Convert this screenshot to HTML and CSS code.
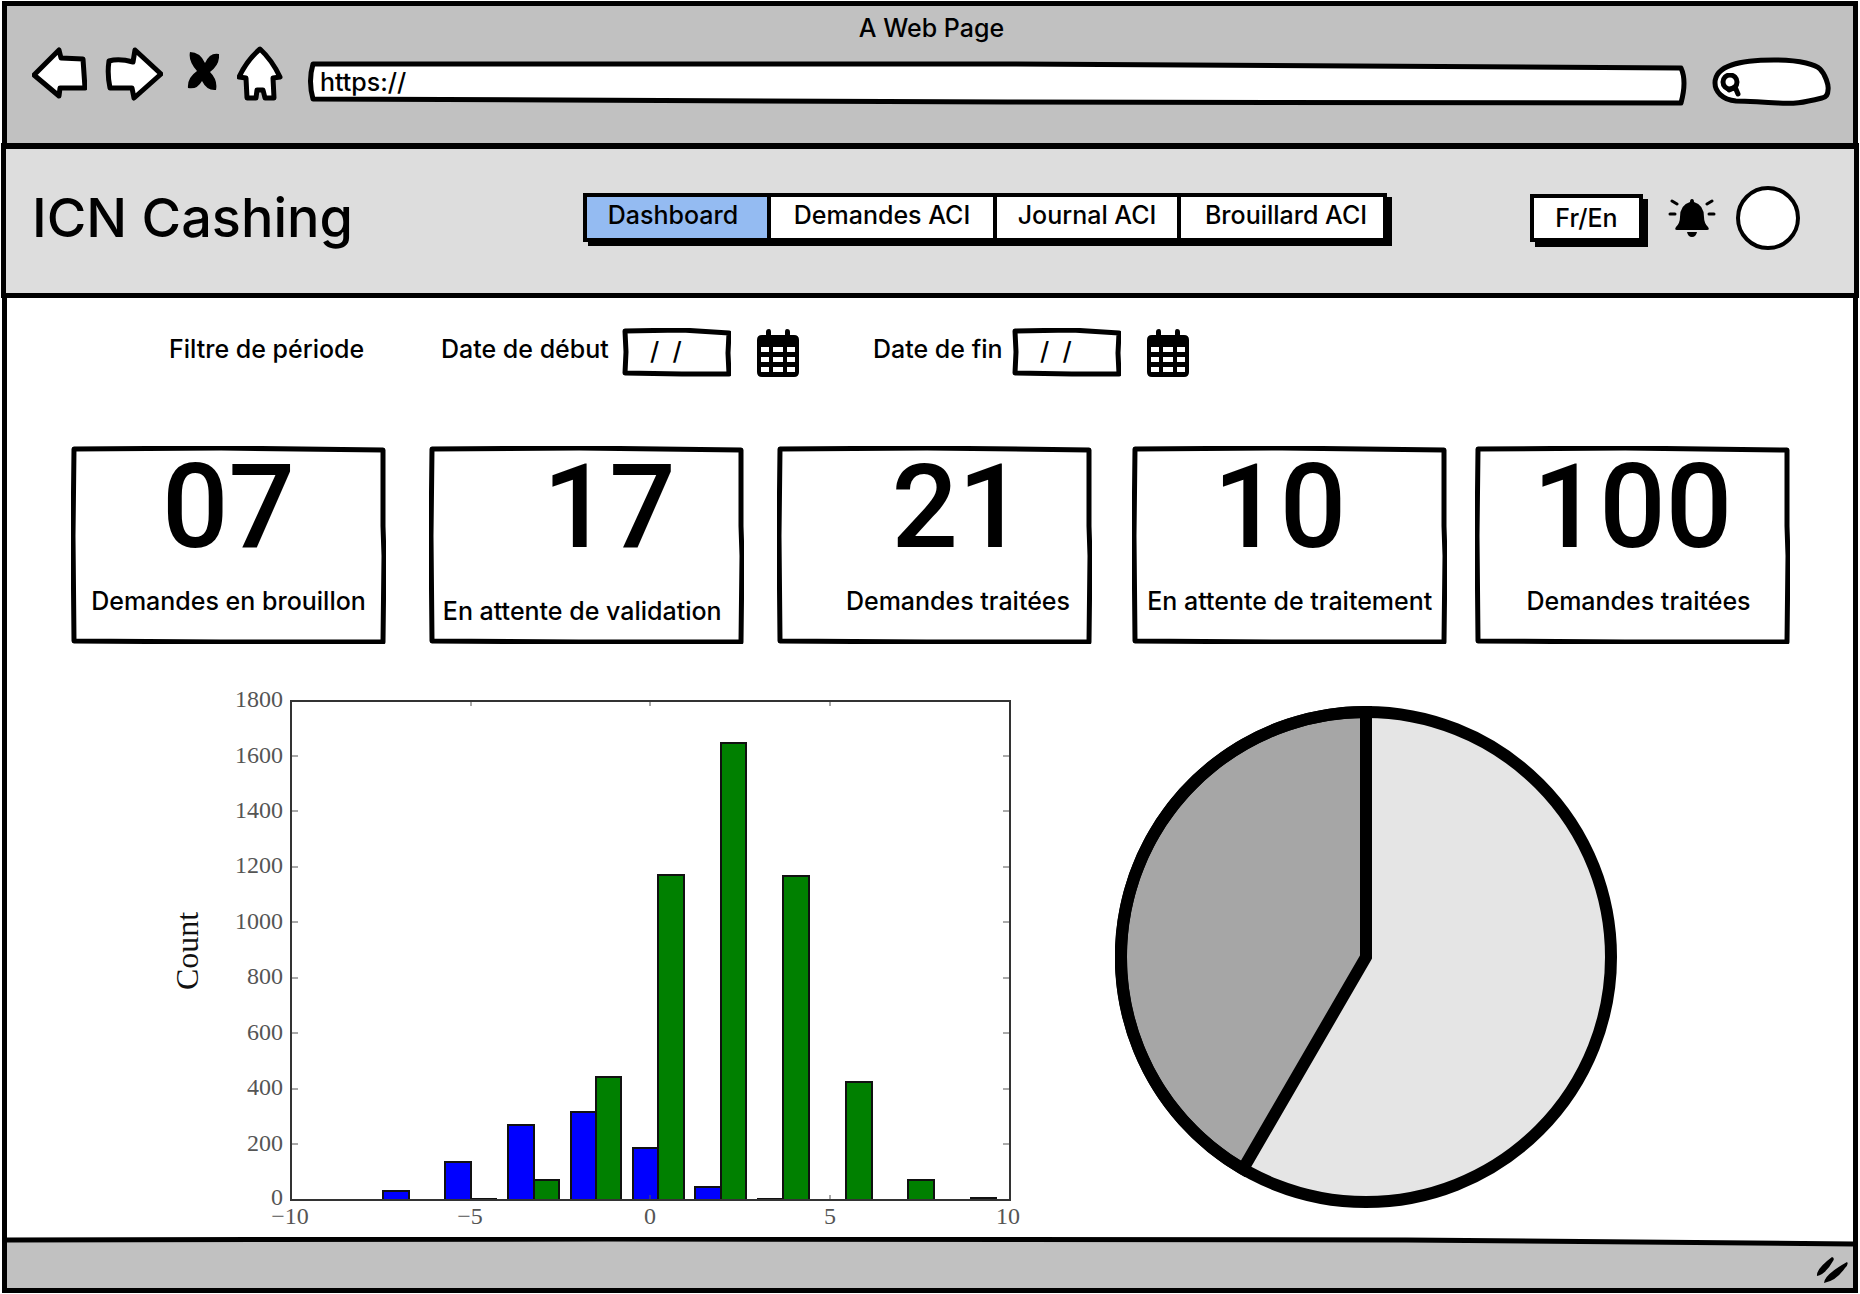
FILE: index.html
```html
<!DOCTYPE html>
<html lang="fr">
<head>
<meta charset="utf-8">
<title>ICN Cashing</title>
<link rel="stylesheet" href="styles.css">
</head>
<body>
<div class="window">
  <div class="toolbar">
    <div class="window-title">A Web Page</div>
    <div class="bar">
      <div class="bar-icons">
        <button class="icon-button" aria-label="Précédent">
          <svg width="55" height="60" viewBox="0 0 55 60"><path class="ink paper" d="M2 29 L27 4 L29 12 L51 13 L53 42 L28 42 L27 50 Z"/></svg>
        </button>
        <button class="icon-button" aria-label="Suivant">
          <svg width="58" height="60" viewBox="0 0 58 60"><path class="ink paper" d="M4 15 Q14 12 28 16 L30 4 L56 28 L29 52 L27 42 L5 42 Q2 28 4 15 Z"/></svg>
        </button>
        <button class="icon-button" aria-label="Arrêter">
          <svg width="38" height="60" viewBox="0 0 38 60"><path d="M9 6 Q19 6 24 17 Q29 6 38 8 Q39 19 29 26 Q37 34 35 44 Q26 45 21 35 Q16 44 7 42 Q6 32 16 25 Q7 15 9 6 Z"/></svg>
        </button>
        <button class="icon-button" aria-label="Accueil">
          <svg width="46" height="60" viewBox="0 0 46 60"><path class="ink paper" d="M23 3 Q35 14 43 31 L36 32 L37 52 L28 52 L26 44 L20 44 L19 52 L10 52 L9 32 L2 31 Q10 14 23 3 Z"/></svg>
        </button>
      </div>
      <div class="sketch address">
        <svg class="frame" viewBox="0 0 1379 45" preserveAspectRatio="none" aria-hidden="true"><path d="M5 3 L700 3 L1373 7 Q1379 20 1373 42 L700 41 L5 38 Q0 20 5 3 Z"/></svg>
        <input class="address-input" type="text" value="https://" aria-label="Adresse">
      </div>
      <div class="sketch search">
        <svg class="frame" viewBox="0 0 119 49" preserveAspectRatio="none" aria-hidden="true"><path d="M3 26 C3 8 28 3 62 3 C90 3 104 8 108 12 C113 17 117 28 116 33 Q116 40 110 41 C90 46 82 47 66 46 C44 45 36 44 24 44 C10 43 3 34 3 26 Z"/></svg>
        <svg class="lens" width="22" height="24" viewBox="0 0 22 24" aria-hidden="true"><circle cx="10" cy="9" r="7"/><path d="M9 17 L15 14 L18 21"/></svg>
        <input class="search-input" type="text" aria-label="Rechercher">
      </div>
    </div>
  </div>

  <header class="header">
    <h1 class="brand">ICN Cashing</h1>
    <nav class="tabs">
      <a class="tab tab-active" href="#">Dashboard</a>
      <a class="tab tab-wide" href="#">Demandes ACI</a>
      <a class="tab" href="#">Journal ACI</a>
      <a class="tab tab-last" href="#">Brouillard ACI</a>
    </nav>
    <div class="account">
      <button class="language">Fr/En</button>
      <button class="icon-button" aria-label="Notifications">
        <svg width="48" height="38" viewBox="0 0 48 38"><path d="M24 0 Q26 0 26 3 Q36 6 36 18 Q36 24 40 28 Q42 31 39 31 L9 31 Q6 31 8 28 Q12 24 12 18 Q12 6 22 3 Q22 0 24 0 Z M19 33 L29 33 Q28 38 24 38 Q20 38 19 33 Z"/><path class="ray" d="M2 15 H7 M41 15 H46 M4 2 L9 5 M44 2 L39 5"/></svg>
      </button>
      <button class="avatar" aria-label="Profil"></button>
    </div>
  </header>

  <main class="content">
    <form class="filters">
      <span class="filter-text filter-title">Filtre de période</span>
      <label class="filter-text filter-start" for="start">Date de début</label>
      <div class="sketch date">
        <svg class="frame" viewBox="0 0 109 49" preserveAspectRatio="none" aria-hidden="true"><path d="M3 3 L60 2 L107 5 L106 25 L107 46 L60 46 L3 45 L4 24 Z"/></svg>
        <input class="date-input" id="start" type="text" value="/  /">
      </div>
      <button class="icon-button" type="button" aria-label="Choisir la date de début">
        <svg width="42" height="48" viewBox="0 0 42 48"><path fill-rule="evenodd" d="M9 6 V3 Q9 0 12 0 Q14 0 14 3 V6 H28 V3 Q28 0 30 0 Q33 0 33 3 V6 H37 Q42 6 42 11 V43 Q42 48 37 48 H5 Q0 48 0 43 V11 Q0 6 5 6 Z M4 18 V23 H12 V18 Z M16 18 V23 H26 V18 Z M30 18 V23 H38 V18 Z M4 28 V33 H12 V28 Z M16 28 V33 H26 V28 Z M30 28 V33 H38 V28 Z M4 38 V43 H12 V38 Z M16 38 V43 H26 V38 Z M30 38 V43 H38 V38 Z"/></svg>
      </button>
      <label class="filter-text filter-end" for="end">Date de fin</label>
      <div class="sketch date">
        <svg class="frame" viewBox="0 0 109 49" preserveAspectRatio="none" aria-hidden="true"><path d="M3 3 L60 2 L107 5 L106 25 L107 46 L60 46 L3 45 L4 24 Z"/></svg>
        <input class="date-input" id="end" type="text" value="/  /">
      </div>
      <button class="icon-button" type="button" aria-label="Choisir la date de fin">
        <svg width="42" height="48" viewBox="0 0 42 48"><path fill-rule="evenodd" d="M9 6 V3 Q9 0 12 0 Q14 0 14 3 V6 H28 V3 Q28 0 30 0 Q33 0 33 3 V6 H37 Q42 6 42 11 V43 Q42 48 37 48 H5 Q0 48 0 43 V11 Q0 6 5 6 Z M4 18 V23 H12 V18 Z M16 18 V23 H26 V18 Z M30 18 V23 H38 V18 Z M4 28 V33 H12 V28 Z M16 28 V33 H26 V28 Z M30 28 V33 H38 V28 Z M4 38 V43 H12 V38 Z M16 38 V43 H26 V38 Z M30 38 V43 H38 V38 Z"/></svg>
      </button>
    </form>

    <section class="cards">
      <article class="sketch card">
        <svg class="frame" viewBox="0 0 315 198" preserveAspectRatio="none" aria-hidden="true"><path d="M3 3 L150 2 L312 4 L312 80 L313 110 L312 196 L150 196 L3 195 L2 90 Z"/></svg>
        <p class="count">07</p>
        <p class="caption">Demandes en brouillon</p>
      </article>
      <article class="sketch card">
        <svg class="frame" viewBox="0 0 315 198" preserveAspectRatio="none" aria-hidden="true"><path d="M3 3 L150 2 L312 4 L312 80 L313 110 L312 196 L150 196 L3 195 L2 90 Z"/></svg>
        <p class="count push">17</p>
        <p class="caption caption-low">En attente de validation</p>
      </article>
      <article class="sketch card">
        <svg class="frame" viewBox="0 0 315 198" preserveAspectRatio="none" aria-hidden="true"><path d="M3 3 L150 2 L312 4 L312 80 L313 110 L312 196 L150 196 L3 195 L2 90 Z"/></svg>
        <p class="count push">21</p>
        <p class="caption push">Demandes traitées</p>
      </article>
      <article class="sketch card">
        <svg class="frame" viewBox="0 0 315 198" preserveAspectRatio="none" aria-hidden="true"><path d="M3 3 L150 2 L312 4 L312 80 L313 110 L312 196 L150 196 L3 195 L2 90 Z"/></svg>
        <p class="count pull">10</p>
        <p class="caption">En attente de traitement</p>
      </article>
      <article class="sketch card">
        <svg class="frame" viewBox="0 0 315 198" preserveAspectRatio="none" aria-hidden="true"><path d="M3 3 L150 2 L312 4 L312 80 L313 110 L312 196 L150 196 L3 195 L2 90 Z"/></svg>
        <p class="count">100</p>
        <p class="caption nudge">Demandes traitées</p>
      </article>
    </section>

    <section class="charts">
      <svg class="histogram" viewBox="0 0 860 540" role="img" aria-label="Histogramme">
        <g class="tick-label tick-y">
          <text x="113" y="17">1800</text><text x="113" y="73">1600</text><text x="113" y="128">1400</text><text x="113" y="183">1200</text><text x="113" y="239">1000</text><text x="113" y="294">800</text><text x="113" y="350">600</text><text x="113" y="405">400</text><text x="113" y="461">200</text><text x="113" y="515">0</text>
        </g>
        <g class="tick-label tick-x">
          <text x="120" y="534">−10</text><text x="300" y="534">−5</text><text x="480" y="534">0</text><text x="660" y="534">5</text><text x="838" y="534">10</text>
        </g>
        <text class="axis-title" transform="translate(28 261) rotate(-90)">Count</text>
        <g class="blue">
          <rect x="213" y="501" width="26" height="9"/><rect x="275" y="472" width="26" height="38"/><rect x="338" y="435" width="26" height="75"/><rect x="401" y="422" width="25" height="88"/><rect x="463" y="458" width="25" height="52"/><rect x="525" y="497" width="26" height="13"/><rect x="588" y="509" width="25" height="1"/>
        </g>
        <g class="green">
          <rect x="301" y="509" width="25" height="1"/><rect x="364" y="490" width="25" height="20"/><rect x="426" y="387" width="25" height="123"/><rect x="488" y="185" width="26" height="325"/><rect x="551" y="53" width="25" height="457"/><rect x="613" y="186" width="26" height="324"/><rect x="676" y="392" width="26" height="118"/><rect x="738" y="490" width="26" height="20"/><rect x="801" y="508" width="25" height="2"/>
        </g>
        <path class="ticks" d="M121 66h7M121 121h7M121 177h7M121 232h7M121 288h7M121 343h7M121 399h7M121 454h7M840 66h-7M840 121h-7M840 177h-7M840 232h-7M840 288h-7M840 343h-7M840 399h-7M840 454h-7M301 11v5M480 11v5M660 11v5M480 510v-5M660 510v-5"/>
        <rect class="plot-frame" x="121" y="11" width="719" height="499"/>
      </svg>
      <svg class="pie" viewBox="0 0 502 502" role="img" aria-label="Répartition">
        <circle class="slice-light" cx="251" cy="251" r="245"/>
        <path class="slice-dark" d="M251 251 L128 463 A245 245 0 0 1 251 6 Z"/>
        <circle class="pie-ring" cx="251" cy="251" r="245"/>
      </svg>
    </section>
  </main>

  <footer class="status">
    <svg class="status-line" viewBox="0 0 1846 10" preserveAspectRatio="none" aria-hidden="true"><path class="status-bg" d="M0 4 L600 2 L1400 3 L1846 6 V10 H0 Z"/><path class="status-ink" d="M0 3 L600 2 L1400 3 L1846 7"/></svg>
    <svg class="grip" width="32" height="28" viewBox="0 0 32 28" aria-hidden="true"><path d="M16 1 Q19 2 17 5 Q10 18 1 20 Q0 13 16 1 Z M31 6 Q33 8 29 12 Q20 25 8 27 Q8 19 31 6 Z"/></svg>
  </footer>
</div>
</body>
</html>
```
FILE: styles.css
```css
* {
  box-sizing: border-box;
}

body {
  margin: 0;
  background: #fff;
  color: #000;
  font-family: Inter, Roboto, "Liberation Sans", sans-serif;
  font-size: 25px;
  font-weight: 500;
  line-height: 28px;
}

button,
input {
  font: inherit;
  color: inherit;
}

svg {
  display: block;
}

.window {
  display: flex;
  flex-direction: column;
  min-height: calc(100vh - 2px);
  margin: 1px 2px;
  border: 5px solid #000;
}

/* Hand-drawn outlines */
.sketch {
  position: relative;
}

.frame {
  position: absolute;
  inset: 0;
  width: 100%;
  height: 100%;
}

.frame path {
  fill: #fff;
  stroke: #000;
  stroke-width: 5px;
  stroke-linejoin: round;
  vector-effect: non-scaling-stroke;
}

.ink {
  stroke: #000;
  stroke-width: 5px;
  stroke-linejoin: round;
}

.paper {
  fill: #fff;
}

.icon-button {
  flex: none;
  padding: 0;
  border: 0;
  background: none;
}

/* Browser toolbar */
.toolbar {
  padding: 8px 22px 37px 25px;
  background: #c1c1c1;
}

.window-title {
  text-align: center;
}

.bar {
  display: flex;
  align-items: flex-end;
  gap: 25px;
  margin-top: 4px;
}

.bar-icons {
  display: flex;
  gap: 18px;
}

.address {
  flex: 1;
  height: 45px;
}

.address-input,
.search-input,
.date-input {
  position: relative;
  width: 100%;
  height: 100%;
  border: 0;
  background: none;
  outline: 0;
}

.address-input {
  padding: 0 12px 4px;
}

.search {
  flex: none;
  width: 119px;
  height: 49px;
}

.lens {
  position: absolute;
  left: 8px;
  top: 16px;
  fill: none;
  stroke: #000;
  stroke-width: 5px;
  stroke-linecap: round;
}

.search-input {
  padding: 0 12px 0 36px;
}

/* Application header */
.header {
  display: flex;
  align-items: center;
  min-height: 155px;
  margin: 0 -6px;
  padding: 0 54px 7px 26px;
  border: 5px solid #000;
  border-top-width: 6px;
  background: #ddd;
}

.brand {
  flex: 0 0 551px;
  margin: 0;
  font-size: 54px;
  font-weight: 500;
  line-height: 64px;
}

.tabs {
  display: flex;
  border: 4px solid #000;
  background: #fff;
  box-shadow: 5px 4px 0 #000;
}

.tab {
  width: 184px;
  height: 41px;
  padding-top: 4px;
  border-left: 4px solid #000;
  color: #000;
  text-align: center;
  text-decoration: none;
}

.tab-active {
  width: 180px;
  padding-right: 8px;
  border-left: 0;
  background: #94bbf2;
}

.tab-wide {
  width: 226px;
}

.tab-last {
  width: 206px;
  padding-left: 8px;
}

.account {
  display: flex;
  align-items: center;
  gap: 20px;
  margin-left: auto;
}

.language {
  width: 113px;
  height: 48px;
  margin-right: 5px;
  padding: 0;
  border: 4px solid #000;
  background: #fff;
  box-shadow: 5px 5px 0 #000;
}

.ray {
  fill: none;
  stroke: #000;
  stroke-width: 3px;
  stroke-linecap: round;
}

.avatar {
  width: 64px;
  height: 64px;
  padding: 0;
  border: 4px solid #000;
  border-radius: 50%;
  background: #fff;
}

/* Dashboard */
.content {
  flex: 1;
}

.filters {
  display: flex;
  align-items: center;
  margin: 30px 0 0 162px;
}

.filter-text {
  padding-bottom: 8px;
}

.filter-title {
  width: 272px;
}

.filter-start {
  width: 181px;
}

.filter-end {
  width: 139px;
  margin-left: 74px;
}

.date {
  width: 109px;
  height: 49px;
  margin-right: 26px;
}

.date-input {
  padding: 0 8px 4px 28px;
}

.cards {
  display: grid;
  grid-template-columns: 358fr 349fr 355fr 343fr 315fr;
  margin: 69px 63px 0 64px;
}

.card {
  width: 315px;
  max-width: 100%;
  height: 198px;
  text-align: center;
}

.count,
.caption {
  position: relative;
  margin: 0;
}

.count {
  padding-top: 6px;
  font-family: Roboto, "Liberation Sans", sans-serif;
  font-size: 117px;
  line-height: 110px;
}

.caption {
  padding-top: 25px;
}

.caption-low {
  padding-top: 35px;
  padding-right: 8px;
}

.push {
  padding-left: 46px;
}

.pull {
  padding-right: 20px;
}

.nudge {
  padding-left: 12px;
}

.charts {
  display: flex;
  align-items: flex-start;
  gap: 85px;
  margin: 46px 0 0 163px;
}

.histogram {
  flex: 0 1 860px;
  min-width: 0;
  overflow: visible;
}

.tick-label {
  fill: #555;
  font-family: "Liberation Serif", serif;
  font-size: 24px;
  font-weight: 400;
}

.tick-y {
  text-anchor: end;
}

.tick-x {
  text-anchor: middle;
}

.axis-title {
  fill: #111;
  font-family: "Liberation Serif", serif;
  font-size: 32px;
  font-weight: 400;
  text-anchor: middle;
}

.blue,
.green {
  stroke: #111;
  stroke-width: 2px;
}

.blue {
  fill: #00f;
}

.green {
  fill: #008000;
}

.ticks {
  fill: none;
  stroke: #555;
  stroke-width: 1px;
}

.plot-frame {
  fill: none;
  stroke: #333;
  stroke-width: 2px;
}

.pie {
  flex: 0 1 502px;
  min-width: 0;
  margin-top: 16px;
}

.slice-light {
  fill: #e5e5e5;
}

.slice-dark {
  fill: #a6a6a6;
  stroke: #000;
  stroke-width: 12px;
}

.pie-ring {
  fill: none;
  stroke: #000;
  stroke-width: 12px;
}

/* Status bar */
.status {
  background: linear-gradient(#fff 9px, #c1c1c1 9px);
}

.status-line {
  width: 100%;
  height: 10px;
}

.status-bg {
  fill: #c1c1c1;
}

.status-ink {
  fill: none;
  stroke: #000;
  stroke-width: 5px;
}

.grip {
  margin: 9px 5px 4px auto;
}
```
